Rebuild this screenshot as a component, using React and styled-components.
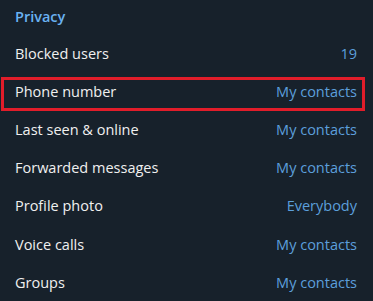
import styled, { createGlobalStyle } from 'styled-components';

const GlobalStyle = createGlobalStyle`
	html, body {
		margin: 0;
		padding: 0;
		background: #17212b;
	}
	body {
		font-family: 'Open Sans', 'Noto Sans', sans-serif;
	}
`;

const Panel = styled.div`
	width: 373px;
	height: 301px;
	background: #17212b;
	overflow: hidden;
`;

const Title = styled.div`
	height: 32px;
	padding: 0 15px 2px;
	display: flex;
	align-items: center;
	color: #6ab2f2;
	font-size: 14.5px;
	font-weight: 600;
`;

const Row = styled.div`
	position: relative;
	height: 38.2px;
	padding: 0 16px 0 15px;
	display: flex;
	align-items: center;
	justify-content: space-between;
	font-size: 14.5px;

	&::after {
		content: '';
		display: ${(p) => (p.$highlighted ? 'block' : 'none')};
		position: absolute;
		left: 1px;
		right: 8px;
		top: 5px;
		bottom: -1px;
		border: 3px solid #e11d2a;
	}
`;

const Label = styled.span`
	color: #f0f0f0;
`;

const Value = styled.span`
	color: #5c9fdb;
`;

const rows = [
	{ label: 'Blocked users', value: '19' },
	{ label: 'Phone number', value: 'My contacts', highlighted: true },
	{ label: 'Last seen & online', value: 'My contacts' },
	{ label: 'Forwarded messages', value: 'My contacts' },
	{ label: 'Profile photo', value: 'Everybody' },
	{ label: 'Voice calls', value: 'My contacts' },
	{ label: 'Groups', value: 'My contacts' },
];

export default function App() {
	return (
		<>
			<GlobalStyle />
			<Panel>
				<Title>Privacy</Title>
				{rows.map((row) => (
					<Row key={row.label} $highlighted={row.highlighted}>
						<Label>{row.label}</Label>
						<Value>{row.value}</Value>
					</Row>
				))}
			</Panel>
		</>
	);
}
